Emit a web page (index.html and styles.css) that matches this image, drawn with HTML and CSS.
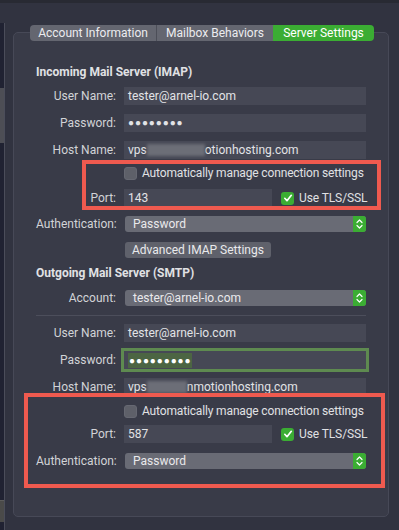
FILE: index.html
```html
<!DOCTYPE html>
<html>
<head>
<meta charset="utf-8">
<link rel="stylesheet" href="styles.css">
</head>
<body>
<div class="window">
  <div class="topbar"></div>
  <div class="content">
    <div class="sidebar">
      <div class="sb-gap"></div>
      <div class="sb-panel">
        <div class="sb-block sb-block-a"></div>
        <div class="sb-fill"></div>
        <div class="sb-block sb-block-b"></div>
      </div>
    </div>
    <div class="main">
      <div class="tabs">
        <div class="tab tab-1">Account Information</div>
        <div class="tab tab-2">Mailbox Behaviors</div>
        <div class="tab tab-3 tab-active">Server Settings</div>
      </div>
      <div class="group">
        <div class="section-title">Incoming Mail Server (IMAP)</div>

        <div class="row row-first">
          <div class="label">User Name:</div>
          <div class="field">tester@arnel-io.com</div>
        </div>
        <div class="row">
          <div class="label">Password:</div>
          <div class="field field-dots">●●●●●●●●</div>
        </div>
        <div class="row">
          <div class="label">Host Name:</div>
          <div class="field">vps<span class="blur blur-a"></span>otionhosting.com</div>
        </div>
        <div class="row row-check">
          <div class="label"></div>
          <div class="check-line"><span class="cb cb-off"></span><span>Automatically manage connection settings</span></div>
        </div>
        <div class="row">
          <div class="label">Port:</div>
          <div class="port-line">
            <div class="field field-port">143</div>
            <span class="cb cb-on"><svg viewBox="0 0 12 12" width="12" height="12"><path d="M2.8 6.3 L5 8.7 L9.3 3.3" fill="none" stroke="#fff" stroke-width="1.7" stroke-linecap="round" stroke-linejoin="round"/></svg></span>
            <span class="tls">Use TLS/SSL</span>
          </div>
        </div>
        <div class="row row-select">
          <div class="label">Authentication:</div>
          <div class="select"><span class="select-text">Password</span><span class="stepper"><svg viewBox="0 0 13 16" width="13" height="16"><path d="M4 6.5 L6.5 4 L9 6.5 M4 9.5 L6.5 12 L9 9.5" fill="none" stroke="#fff" stroke-width="1.2" stroke-linecap="round" stroke-linejoin="round"/></svg></span></div>
        </div>
        <div class="row row-button">
          <div class="label"></div>
          <div class="button-line"><span class="btn">Advanced IMAP Settings</span></div>
        </div>

        <div class="section-title section-title-2">Outgoing Mail Server (SMTP)</div>
        <div class="row row-select row-account">
          <div class="label">Account:</div>
          <div class="select"><span class="select-text">tester@arnel-io.com</span><span class="stepper"><svg viewBox="0 0 13 16" width="13" height="16"><path d="M4 6.5 L6.5 4 L9 6.5 M4 9.5 L6.5 12 L9 9.5" fill="none" stroke="#fff" stroke-width="1.2" stroke-linecap="round" stroke-linejoin="round"/></svg></span></div>
        </div>
        <div class="separator"></div>
        <div class="row row-after-sep">
          <div class="label">User Name:</div>
          <div class="field">tester@arnel-io.com</div>
        </div>
        <div class="row">
          <div class="label">Password:</div>
          <div class="field field-focus"><span class="selected">●●●●●●●●●</span></div>
        </div>
        <div class="row">
          <div class="label">Host Name:</div>
          <div class="field">vps<span class="blur blur-b"></span>nmotionhosting.com</div>
        </div>
        <div class="row row-check row-check-2">
          <div class="label"></div>
          <div class="check-line"><span class="cb cb-off"></span><span>Automatically manage connection settings</span></div>
        </div>
        <div class="row row-port-2">
          <div class="label">Port:</div>
          <div class="port-line">
            <div class="field field-port">587</div>
            <span class="cb cb-on"><svg viewBox="0 0 12 12" width="12" height="12"><path d="M2.8 6.3 L5 8.7 L9.3 3.3" fill="none" stroke="#fff" stroke-width="1.7" stroke-linecap="round" stroke-linejoin="round"/></svg></span>
            <span class="tls">Use TLS/SSL</span>
          </div>
        </div>
        <div class="row row-select row-auth-2">
          <div class="label">Authentication:</div>
          <div class="select"><span class="select-text">Password</span><span class="stepper"><svg viewBox="0 0 13 16" width="13" height="16"><path d="M4 6.5 L6.5 4 L9 6.5 M4 9.5 L6.5 12 L9 9.5" fill="none" stroke="#fff" stroke-width="1.2" stroke-linecap="round" stroke-linejoin="round"/></svg></span></div>
        </div>

        <div class="annot annot-1"></div>
        <div class="annot annot-2"></div>
      </div>
    </div>
  </div>
</div>
</body>
</html>
```
FILE: styles.css
```css
* { box-sizing: border-box; }
html, body { margin: 0; padding: 0; }
body {
  width: 399px;
  height: 530px;
  overflow: hidden;
  background: #313340;
  font-family: Roboto, "Liberation Sans", sans-serif;
  font-size: 12px;
  color: #d8d9dd;
}
.window { display: flex; flex-direction: column; height: 530px; }
.topbar { height: 3px; background: #282a33; flex: none; }
.content { flex: 1; display: flex; }

.sidebar { width: 5px; display: flex; flex-direction: column; flex: none; }
.sb-gap { height: 20px; }
.sb-panel {
  flex: 1;
  background: #202232;
  border-right: 1px solid #4b4d5a;
  display: flex;
  flex-direction: column;
}
.sb-block-a { margin-top: 65px; height: 55px; background: #4d4e55; }
.sb-fill { flex: 1; }
.sb-block-b { height: 22px; margin-bottom: 8px; background: #4a4a49; border-top: 1px solid #5c5c5b; }

.main { padding: 22px 0 0 8px; }

.tabs {
  position: relative;
  z-index: 2;
  display: flex;
  margin-left: 17px;
  height: 16px;
  margin-bottom: -9px;
  width: 344px;
}
.tab {
  height: 16px;
  line-height: 16px;
  text-align: center;
  background: #646670;
  color: #ececef;
  font-size: 12px;
  white-space: nowrap;
}
.tab-1 { width: 127px; border-radius: 4px 0 0 4px; border-right: 1px solid #4c4e58; }
.tab-2 { width: 116px; }
.tab-3 { width: 101px; border-radius: 0 4px 4px 0; }
.tab-active { background: #3bad33; color: #fff; }

.group {
  position: relative;
  width: 376px;
  background: #393b48;
  border: 1px solid #474957;
  border-radius: 5px;
  padding: 31px 0 47px 22px;
}

.section-title {
  font-weight: bold;
  line-height: 16px;
  height: 16px;
  color: #e0e1e4;
}
.section-title-2 { margin-top: 7px; }

.row {
  display: grid;
  grid-template-columns: 80px 242px;
  column-gap: 8px;
  align-items: center;
  margin-top: 9px;
  height: 18px;
}
.row-first { margin-top: 7px; }
.label { text-align: right; color: #d2d3d7; white-space: nowrap; }

.field {
  height: 18px;
  line-height: 18px;
  background: #464855;
  padding-left: 4px;
  color: #e2e3e6;
  white-space: nowrap;
  display: flex;
  align-items: center;
}
.field-dots { font-size: 10px; letter-spacing: 0.9px; }
.blur {
  display: inline-block;
  height: 12px;
  background: #6c6e77;
  filter: blur(1.5px);
}
.blur-a { width: 58px; }
.blur-b { width: 40px; }

.row-check { height: 14px; margin-top: 7px; }
.row-check-2 { margin-top: 8px; }
.check-line {
  display: flex;
  align-items: center;
  gap: 5px;
  color: #e0e1e4;
  white-space: nowrap;
  letter-spacing: -0.15px;
}
.cb {
  width: 13px;
  height: 13px;
  border-radius: 3px;
  flex: none;
  display: inline-flex;
  align-items: center;
  justify-content: center;
}
.cb-off { background: #5e6069; border: 1px solid #666872; }
.cb-on { background: #3bad33; }

.port-line { display: flex; align-items: center; white-space: nowrap; }
.field-port { width: 148px; flex: none; }
.port-line .cb { margin-left: 9px; }
.tls { margin-left: 5px; color: #e0e1e4; white-space: nowrap; letter-spacing: -0.1px; }

.row-select { height: 16px; }
.select {
  margin-left: 1px;
  width: 241px;
  height: 16px;
  background: #696b75;
  border-radius: 3px;
  display: flex;
  align-items: center;
  justify-content: space-between;
  overflow: hidden;
}
.select-text { padding-left: 8px; color: #e9e9ec; }
.stepper {
  width: 13px;
  height: 16px;
  background: #3bad33;
  display: flex;
}

.row-button { height: 16px; margin-top: 10px; }
.button-line { display: flex; }
.btn {
  margin-left: 1px;
  height: 16px;
  line-height: 16px;
  background: #5f616b;
  border-radius: 3px;
  padding: 0 7px;
  color: #e9e9ec;
  white-space: nowrap;
}

.separator { margin-top: 9px; height: 1px; width: 330px; background: #4c4e5b; }
.row-after-sep { margin-top: 8px; }

.field-focus {
  box-shadow: 0 0 0 3px #5e8a50;
  padding-left: 4px;
}
.selected {
  background: #4c6543;
  font-size: 10px;
  letter-spacing: 0.9px;
  color: #fff;
  padding: 0 1px;
  line-height: 15px;
}

.row-port-2 { margin-top: 7px; }
.row-auth-2 { margin-top: 10px; }

.annot {
  position: absolute;
  border: 4px solid #ef5a4f;
  pointer-events: none;
}
.annot-1 { left: 68px; top: 127px; width: 299px; height: 50px; }
.annot-2 { left: 10px; top: 360px; width: 361px; height: 95px; }
```
